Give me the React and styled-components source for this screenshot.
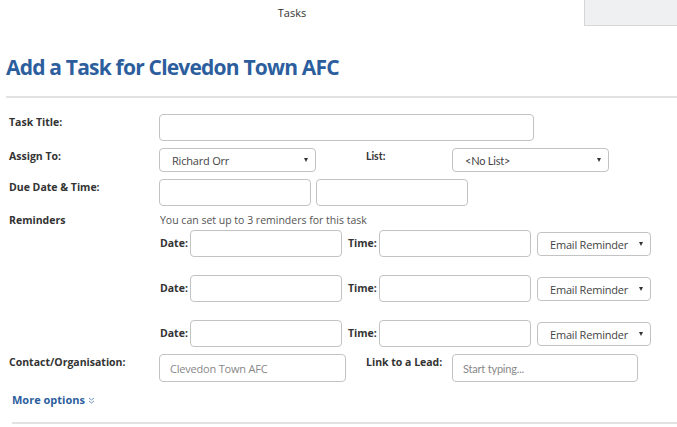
import React from 'react';
import styled, { createGlobalStyle } from 'styled-components';

const GlobalStyle = createGlobalStyle`
  body {
    margin: 0;
    background: #fff;
    font-family: "Open Sans", "Liberation Sans", sans-serif;
    color: #333;
  }
`;

const Page = styled.div`
  width: 677px;
  height: 427px;
  overflow: hidden;
`;

const TopBar = styled.div`
  display: flex;
  height: 26px;
`;

const TabTitle = styled.div`
  flex: 1;
  display: flex;
  justify-content: center;
  align-items: center;
  font-size: 11px;
  color: #333;
  padding-bottom: 1px;
`;

const SideTab = styled.div`
  width: 92px;
  background: #eef0f1;
  border-left: 1px solid #d4d6d7;
  border-bottom: 1px solid #d4d6d7;
`;

const Heading = styled.h1`
  margin: 27px 0 0 6px;
  font-size: 21px;
  font-weight: 700;
  color: #2c5e9e;
  line-height: 28px;
  letter-spacing: -0.8px;
`;

const Divider = styled.div`
  height: 2px;
  background: #e2e2e2;
  margin: ${({ top }) => top}px 0 0 ${({ left }) => left}px;
`;

const Form = styled.div`
  padding: 16px 0 0 9px;
`;

const Row = styled.div`
  display: flex;
  align-items: flex-start;
  margin-bottom: ${({ gap }) => (gap === undefined ? 7 : gap)}px;
`;

const Label = styled.div`
  width: ${({ w }) => w || 150}px;
  flex-shrink: 0;
  font-size: 10.5px;
  font-weight: 700;
  color: #333;
  line-height: 15px;
  padding-top: ${({ pt }) => (pt === undefined ? 1 : pt)}px;
  margin-left: ${({ ml }) => ml || 0}px;
  font-family: ${({ lato }) => (lato ? 'Lato, "Open Sans", sans-serif' : '"Open Sans", sans-serif')};
`;

const InlineLabel = styled.div`
  width: ${({ w }) => w}px;
  font-size: 10.5px;
  font-weight: 700;
  color: #333;
  line-height: 27px;
`;

const Input = styled.div`
  box-sizing: border-box;
  width: ${({ w }) => w}px;
  height: ${({ h }) => h || 27}px;
  border: 1px solid #c3c3c3;
  border-radius: 4px;
  background: #fff;
  margin-right: ${({ mr }) => mr || 0}px;
  display: flex;
  align-items: center;
  padding-left: 10px;
  font-size: 11px;
  letter-spacing: -0.2px;
  color: #888;
  font-family: ${({ lato }) => (lato ? 'Lato, "Open Sans", sans-serif' : '"Open Sans", sans-serif')};
`;

const Select = styled.div`
  box-sizing: border-box;
  position: relative;
  width: ${({ w }) => w}px;
  height: 24px;
  border: 1px solid #c3c3c3;
  border-radius: 4px;
  background: #fff;
  margin-top: ${({ mt }) => mt || 0}px;
  display: flex;
  align-items: center;
  padding-left: 12px;
  font-size: 11px;
  letter-spacing: -0.2px;
  color: #444;
  font-family: ${({ lato }) => (lato ? 'Lato, "Open Sans", sans-serif' : '"Open Sans", sans-serif')};

  &::after {
    content: "";
    position: absolute;
    right: 7px;
    top: 9px;
    border-left: 2.5px solid transparent;
    border-right: 2.5px solid transparent;
    border-top: 4px solid #333;
  }
`;

const Fields = styled.div`
  display: flex;
  flex-direction: column;
`;

const Note = styled.div`
  font-size: 10.5px;
  color: #555;
  line-height: 15px;
  margin: 0 0 2px 1px;
`;

const ReminderRow = styled.div`
  display: flex;
  align-items: flex-start;
  margin-bottom: ${({ last }) => (last ? 0 : 18)}px;
  padding-left: 1px;
`;

const MoreLink = styled.a`
  display: inline-flex;
  align-items: center;
  margin: 10px 0 0 3px;
  font-size: 11px;
  font-weight: 700;
  line-height: 16px;
  color: #2c5e9e;
  text-decoration: none;
  gap: 3px;
`;

function DoubleChevron() {
  return (
    <svg width="7" height="7" viewBox="0 0 7 7" fill="none" stroke="#6f93c2" strokeWidth="1">
      <path d="M1 1 L3.5 3 L6 1" />
      <path d="M1 4 L3.5 6 L6 4" />
    </svg>
  );
}

function Reminder({ last }) {
  return (
    <ReminderRow last={last}>
      <InlineLabel w={30}>Date:</InlineLabel>
      <Input w={152} mr={6} />
      <InlineLabel w={31}>Time:</InlineLabel>
      <Input w={152} mr={6} />
      <Select w={114} mt={2}>Email Reminder</Select>
    </ReminderRow>
  );
}

export default function App() {
  return (
    <Page>
      <GlobalStyle />
      <TopBar>
        <TabTitle>Tasks</TabTitle>
        <SideTab />
      </TopBar>
      <Heading>Add a Task for Clevedon Town AFC</Heading>
      <Divider top={15} left={6} />
      <Form>
        <Row>
          <Label>Task Title:</Label>
          <Input w={375} />
        </Row>
        <Row>
          <Label>Assign To:</Label>
          <Select w={157}>Richard Orr</Select>
          <Label w={86} ml={50} lato>List:</Label>
          <Select w={157} lato>&lt;No List&gt;</Select>
        </Row>
        <Row>
          <Label>Due Date &amp; Time:</Label>
          <Input w={152} mr={5} />
          <Input w={152} />
        </Row>
        <Row>
          <Label pt={0}>Reminders</Label>
          <Fields>
            <Note>You can set up to 3 reminders for this task</Note>
            <Reminder />
            <Reminder />
            <Reminder last />
          </Fields>
        </Row>
        <Row gap={0}>
          <Label>Contact/Organisation:</Label>
          <Input w={187} h={28}>Clevedon Town AFC</Input>
          <Label w={86} ml={20}>Link to a Lead:</Label>
          <Input w={186} h={28} lato>Start typing...</Input>
        </Row>
        <MoreLink href="#">More options <DoubleChevron /></MoreLink>
      </Form>
      <Divider top={13} left={12} />
    </Page>
  );
}
